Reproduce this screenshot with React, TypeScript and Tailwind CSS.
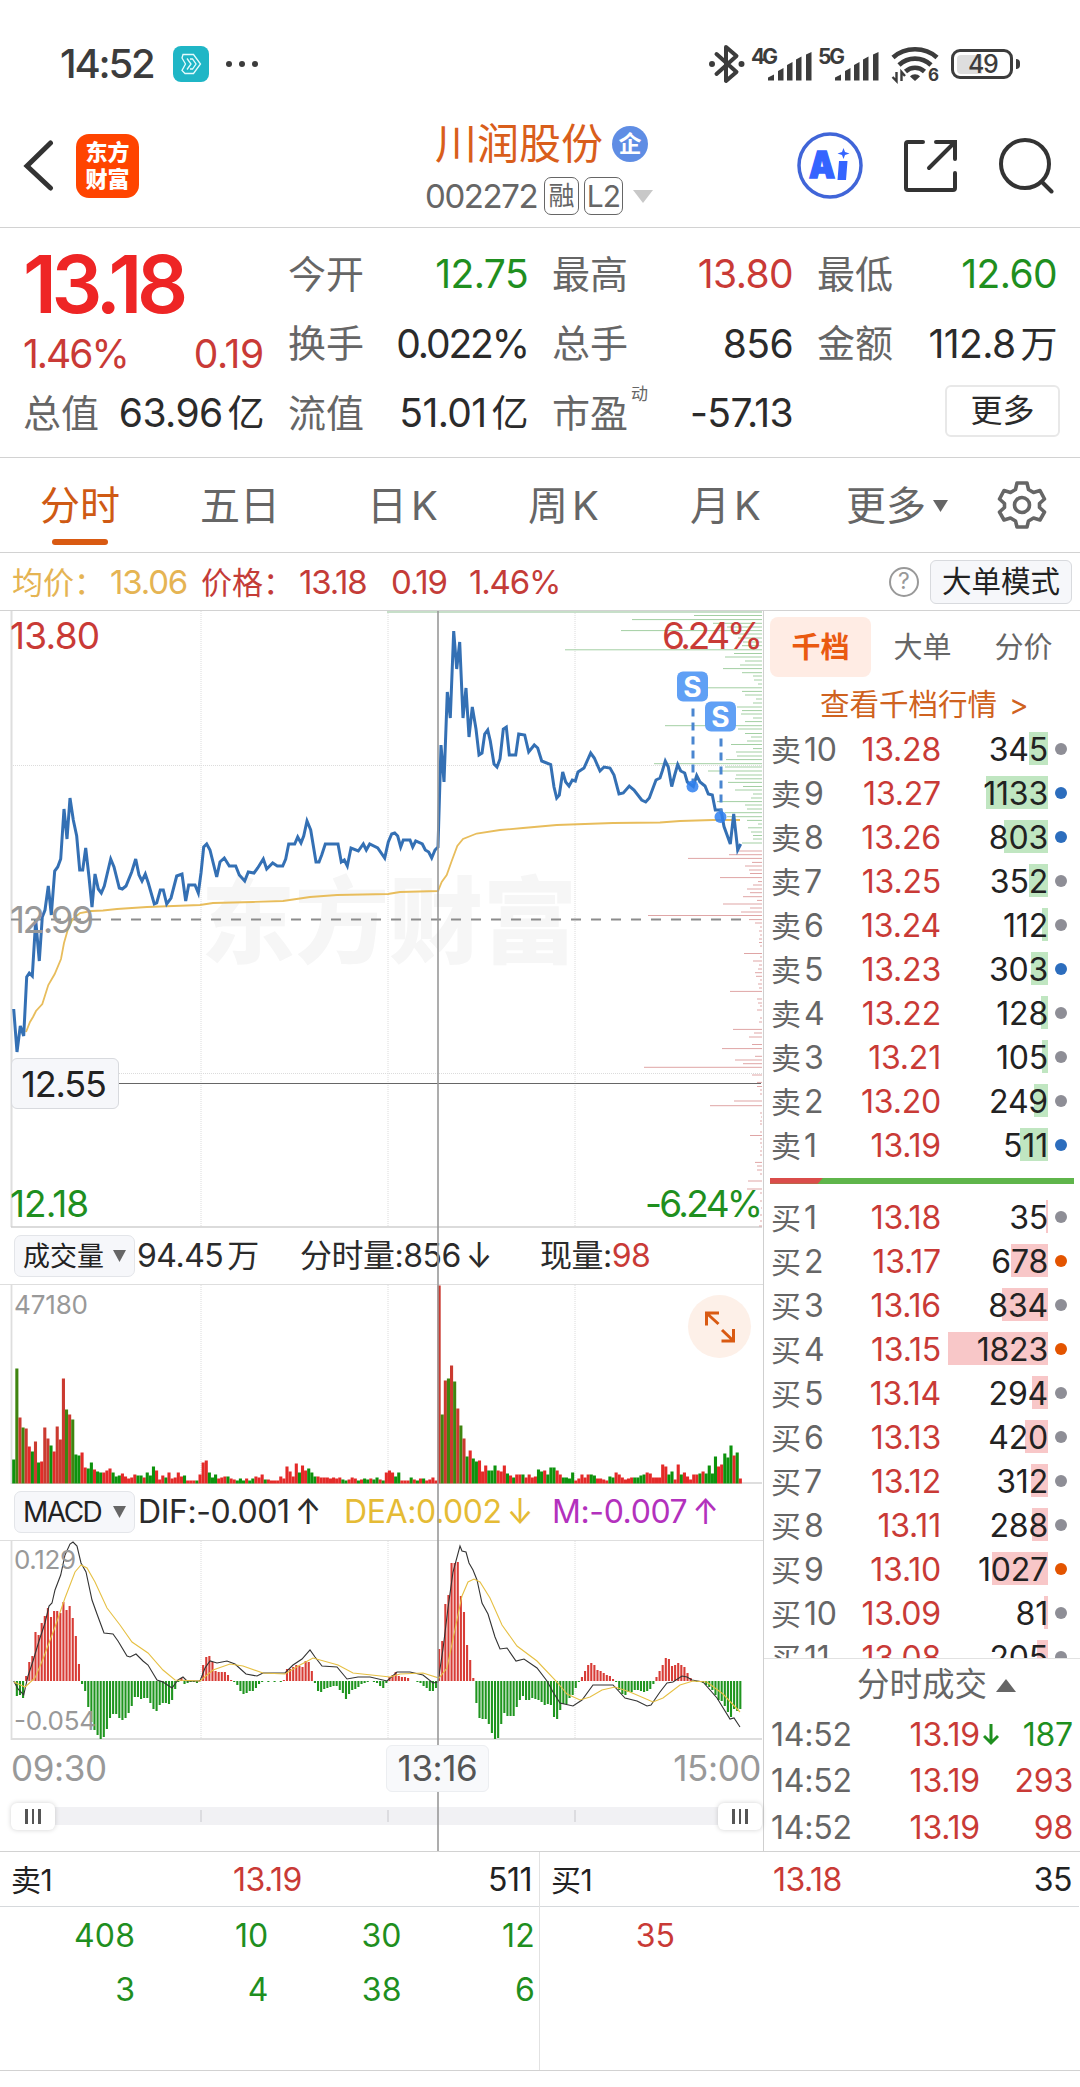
import type { ReactNode } from "react";

const sells = [
  { level: 10, price: "13.28", volume: 345, dot: "gray" },
  { level: 9, price: "13.27", volume: 1133, dot: "blue" },
  { level: 8, price: "13.26", volume: 803, dot: "blue" },
  { level: 7, price: "13.25", volume: 352, dot: "gray" },
  { level: 6, price: "13.24", volume: 112, dot: "gray" },
  { level: 5, price: "13.23", volume: 303, dot: "blue" },
  { level: 4, price: "13.22", volume: 128, dot: "gray" },
  { level: 3, price: "13.21", volume: 105, dot: "gray" },
  { level: 2, price: "13.20", volume: 249, dot: "gray" },
  { level: 1, price: "13.19", volume: 511, dot: "blue" },
];

const buys = [
  { level: 1, price: "13.18", volume: 35, dot: "gray" },
  { level: 2, price: "13.17", volume: 678, dot: "orange" },
  { level: 3, price: "13.16", volume: 834, dot: "gray" },
  { level: 4, price: "13.15", volume: 1823, dot: "orange" },
  { level: 5, price: "13.14", volume: 294, dot: "gray" },
  { level: 6, price: "13.13", volume: 420, dot: "gray" },
  { level: 7, price: "13.12", volume: 312, dot: "gray" },
  { level: 8, price: "13.11", volume: 288, dot: "gray" },
  { level: 9, price: "13.10", volume: 1027, dot: "orange" },
  { level: 10, price: "13.09", volume: 81, dot: "gray" },
  { level: 11, price: "13.08", volume: 205, dot: "gray" },
];

const MAX_VOLUME = 1823;

const dotColors: Record<string, string> = {
  gray: "bg-[#8e8e96]",
  blue: "bg-[#2c6dbd]",
  orange: "bg-[#e35400]",
};

const pricePoints =
  "13.7,398 17,441 20.3,415 23.7,425 26.7,366 29.3,362 32.3,365 35.7,309 39.3,350 42.3,306 45,299 48.3,275 51.3,304 54.7,260 57.7,256 60.7,248 64,198 67,228 70,187 73.3,209 76.7,225 79.7,259 82.7,259 85.7,237 89,266 92,296 95,263 98.3,278 101.3,282 104.3,275 110.7,248 114,256 119.3,277 122.3,278 126,275 131.7,261 135.7,248 139,264 142,270 145.3,263 148.3,272 154.3,293 156.7,292 160.3,279 163.3,279 166.7,293 171,287 176.7,265 182,263 185.7,290 188.7,274 195,274 198.3,282 201,262 203.7,236 206.7,233 210,239 216.7,266 220,251 224.3,247 229.3,255 235.7,255 239.3,264 244.7,270 248.3,261 254,262 257.7,257 263.3,248 266.7,258 272.7,252 277.3,255 282.7,255 285.7,248 288.7,233 294.7,233 297.7,226 301,232 303.7,225 307,210 310.7,219 316,251 319,251 321.7,244 325.3,233 338,233 341.3,251 344.3,249 347.3,255 351,237 358.3,240 363.3,233 366.3,239 369.7,233 377.7,237 384.7,247 388.3,231 391.7,223 394.7,222 397.7,225 400.7,236 403.3,229 410,229 412.7,236 415.7,230 422.3,233 425.3,239 428.7,241 431.7,247 435,239 438,236 441,134 444,171 447.3,81 450.3,107 453.7,20 456.7,58 459.7,31 463,107 466,77 469,126 472.3,96 476,118 479,144 482,142 484.7,123 487.7,119 490.3,130 494,153 497,156 500,148 503.3,118 506.3,116 509.3,144 515.7,144 518.7,123 524.7,124 528.7,141 534.3,134 537.7,137 541.7,150 550.7,153.5 554,176 556.7,187 559.3,184 562.7,161 565.7,171 569,175 572.3,169 575.3,170 578,161 584,157 590.7,142 594.3,147 600,160 604,156 610,157 614,164 619,183 623.3,182 629.3,175 634,179 641.7,189 645.7,191 649.3,187 656,169 660,167 662.3,160 665.3,150 668.3,156 671.7,175.5 674.7,164 677.7,153.5 680.7,160 684.7,162 687.3,171 693.3,175.5 696.7,164.5 700,171 705,175 708.3,183 712.3,184 715.3,199 721,199 724,215.5 730.3,233 733.7,203 737.7,239 740.7,233";

const averagePoints =
  "26,421 30,411 33,406 36,400 42.3,393 48.3,374 54.7,363 61,348 64,332 67.7,319 72.7,308 80,302 91.7,300 103,299.5 117,298 147,296 200,294 213,292 253,291 283,290 310,286 337,284 388,283 400,281 438,280 441.7,271 446.7,264 451.7,250 457.3,235 463,228 476.7,222.5 500,219 523,217 556.7,214 613,212 660,211.5 680,210 713,209 740,209";

// [y, length] of every resting order level, drawn from the right edge
const askLevels = [
  [4.5, 68], [8.6, 130], [12.3, 49], [16, 35], [19.6, 141], [23, 29], [27, 24], [31, 19], [34.7, 20], [38.8, 197],
  [42.5, 28], [46, 37], [50, 17], [54, 22], [57.6, 39], [61.7, 20], [65, 9], [69, 8], [73, 4], [76.8, 54],
  [80.4, 20], [84, 17], [88, 6], [92, 9], [96, 25], [99.6, 20], [103, 21], [107, 9], [110.6, 17], [114.7, 97],
  [118, 24], [122.5, 17], [126, 11], [130, 15], [133.5, 31], [137.6, 9], [141, 26], [145, 25], [148.6, 36], [152.7, 108],
  [156, 37], [160, 54], [164, 26], [167.8, 27], [171.4, 34], [175.5, 19], [179, 27], [183, 9], [187, 11], [190.6, 45],
  [194, 17], [198, 15], [201.7, 37], [205.7, 35], [209.4, 15], [213, 4], [216.8, 14], [221, 11], [224.5, 9], [228, 9], [232, 20],
];

const bidLevels = [
  [240, 26], [243.7, 33], [247.4, 74], [251.4, 10], [255, 17], [259, 13], [262.5, 12], [266.6, 42], [270.6, 4], [274, 9],
  [278, 15], [281.7, 12], [285.7, 19], [289.4, 5], [293, 39], [297, 12], [301, 21], [304.5, 114], [308.6, 13], [312, 7],
  [316, 2], [320, 3], [324, 2], [328, 3], [331.5, 3], [335, 2], [342.5, 18], [346, 2], [350, 9], [354, 3],
  [358, 4], [361.7, 7], [365.3, 6], [369, 2], [373, 4], [377, 3], [380.4, 32], [388, 5], [392, 4], [395, 2],
  [399, 5], [407, 2], [411, 3], [418.4, 29], [422, 8], [426, 13], [433.5, 10], [437.6, 40], [445.3, 7], [449, 27],
  [452.7, 19], [456.3, 118], [464, 10], [471.4, 5], [475.5, 5], [479, 2], [483, 2], [490, 28], [494.7, 52], [502, 2],
  [506, 1], [510, 2], [513, 2], [521, 2], [524.5, 12], [528, 2], [532, 2], [536, 1], [540, 2], [544, 2],
  [551.4, 7], [555, 5], [559, 5], [563, 2], [570, 14], [578, 15], [582, 2], [590, 2], [597, 1], [604, 2], [610, 2], [615, 3],
];

// one entry per minute, "g" falls and "r" rises
const minuteVolumes =
  "g24 g115 r66 g56 r55 r37 g32 r42 g21 r22 r56 r45 g38 r32 r57 r44 r105 g74 r69 g64 g29 g28 r31 r16 g15 g21 r14 g12 g11 r11 r13 r15 g11 g7 g8 r10 r7 r5 r6 r9 g8 g8 r6 g11 g8 g17 r13 r4 r8 g6 r11 r5 r6 r11 r7 g8 r3 r3 r3 g3 r9 r21 r23 g11 g6 g9 r5 r6 r7 g7 r5 r4 g3 g5 g3 r5 g3 g5 r7 r6 r9 g4 r4 r3 r3 r3 r7 r5 r17 r12 r7 r20 g11 r18 r13 g15 g11 g7 r7 r6 r6 r6 r5 r6 r5 r6 g4 g3 r4 r6 r5 g3 r4 g5 g4 r5 g4 g6 r4 g3 r11 r13 r11 g7 g11 r3 r3 r3 g6 r4 g3 r5 g5 r3 r4 r6 r3 r198 g69 r103 g105 r118 g102 r75 g58 r45 g27 r33 g25 g22 r23 r12 r18 g13 g13 g18 r13 r12 r18 g10 r8 g6 r9 r9 g9 r6 r9 r6 r7 g14 g12 r13 g9 g16 g16 r13 r9 g6 g6 g5 g11 r3 r5 r9 r6 r9 g9 g8 r5 r5 r4 r3 g7 g6 r11 r9 r6 r4 r5 r6 g6 g6 g8 g9 r11 r10 r6 r6 r6 r19 r17 g9 g12 r4 r19 g9 r11 r7 r4 r9 r9 g10 r12 g10 g18 g10 g27 r17 r19 g30 g26 g38 r28 g31 r5"
    .split(" ")
    .map((v) => ({ up: v[0] === "r", size: Number(v.slice(1)) }));

const macdBars = [
  0, -15, -14, -17, 5, 19, 25, 49, 46, 58, 65, 73, 64, 70, 70, 68, 79, 71, 75, 63, 45, 17, -3, -10, -26, -41, -49, -54, -58, -56,
  -48, -37, -33, -33, -37, -39, -37, -32, -25, -16, -16, -18, -17, -17, -22, -28, -30, -24, -22, -22, -23, -19, -8, -1, 3, -3, -2, -1, -1, -2,
  1, 16, 24, 25, 19, 10, 9, 9, 9, 6, 1, -1, -4, -10, -13, -12, -10, -10, -7, -3, -1, 0, -1, 0, -1, 0, -1, 1, 12, 12,
  14, 16, 15, 14, 20, 19, 10, -2, -10, -11, -8, -7, -6, -5, -5, -9, -12, -18, -13, -9, -8, -6, -3, -2, -1, 0, -1, -2, -5, -7,
  -2, 4, 6, 9, 5, 4, 4, 3, 0, 0, -1, -2, -5, -7, -10, -10, -7, 32, 40, 77, 86, 118, 118, 119, 85, 69, 36, 21, 3, -22,
  -37, -38, -38, -43, -52, -58, -57, -43, -32, -35, -35, -35, -26, -19, -15, -19, -19, -17, -18, -19, -21, -24, -23, -24, -36, -38, -29, -23, -23, -17,
  -14, -7, -1, 4, 10, 16, 18, 16, 11, 10, 8, 6, 5, 2, -1, -9, -13, -14, -11, -11, -9, -9, -10, -11, -10, -8, -3, 4, 10, 16,
  23, 22, 15, 16, 18, 16, 14, 8, 3, 0, -1, -1, -2, -4, -6, -9, -14, -19, -20, -25, -31, -36, -28, -30, -28,
];

const difPoints =
  "13.7,140 18,148 23.7,154 28,135 33,120 39,100 45,82 49,65 52,62 55,49 60.7,34 65,14 70,3 73,1 77,5 81,22 86,31 92,59 97,73 104,92 113,93 118,100 127,115 130,116 136,113 143,120 148,124 157,139 163,141 172,147 178,139 183,136 187,140 200,140 205,127 210,120 217,122 227,120 235,123 246,133 257,135 263,132 285,132 293,124 302,118 310,109 315,116 322,125 337,126 347,138 358,136 370,136 387,140 397,131 410,131 423,134 433,142 438,141 443,108 448,67 453,31 460,5 462,10 466,11 469,22 473,29 477,39 482,62 488,73 495,96 500,108 507,107 516,120 524,118 537,127 547,140 553,151 560,162 573,165 582,159 593,144 613,144 625,157 637,160 647,165 651,164 660,151 667,142 673,141 682,135 687,136 692,139 703,141 717,157 730,178 734,177 740,186";

const deaPoints =
  "14,141 25,146 35,137 43,118 55,86 65,57 75,31 81,24 87,27 95,41 107,67 120,84 132,101 148,112 163,129 175,139 200,140 213,129 230,123 243,125 263,132 285,133 300,124 313,117 338,124 353,132 390,136 400,133 423,132 439,137 447,127 453,98 462,55 468,41 474,38 480,41 490,57 502,84 517,105 537,120 557,141 567,153 580,159 590,156 602,149 615,146 630,151 653,161 663,157 680,144 693,140 707,141 723,153 740,171";

const STEP = 3.105;
const gridX = [201, 388, 575];

function StatusBar() {
  return (
    <div className="flex h-[128px] items-center pl-[60px] pr-[60px] text-[#3c3c3c]">
      <span className="w-[95px] text-[40px] font-medium leading-none tracking-[-2.2px]">14:52</span>
      <div className="ml-[18px] flex size-9 items-center justify-center rounded-[8px] bg-[#1fb6c6]">
        <svg width="22" height="22" viewBox="0 0 22 22" fill="none" stroke="#e6fbfd" strokeWidth="1.3">
          <path d="M3 1.500h10.500l7 9.500-7 9.500H5L2 17.500 5.500 11 2 5z" />
          <path d="M7 5.500l4 5.500-4 5.500M10 6h2.500l3.500 5-3.500 5H10" />
        </svg>
      </div>
      <div className="ml-[17px] flex gap-[7px]">
        <i className="size-[6px] rounded-full bg-current" />
        <i className="size-[6px] rounded-full bg-current" />
        <i className="size-[6px] rounded-full bg-current" />
      </div>
      <div className="ml-auto flex items-center">
        <svg width="36" height="40" viewBox="0 0 36 40" fill="none" stroke="currentColor" strokeWidth="4" strokeLinejoin="round" strokeLinecap="round">
          <path d="M7.500 10l20 18-10.500 9V3l10.500 9-20 18" />
          <circle cx="3" cy="20" r="1.5" strokeWidth="3" />
          <circle cx="32.500" cy="20" r="1.500" strokeWidth="3" />
        </svg>
        <Signal label="4G" className="ml-[7px]" />
        <Signal label="5G" className="ml-[7px]" />
        <svg className="ml-3 overflow-visible" width="48" height="38" viewBox="0 0 48 38" fill="none" stroke="currentColor" strokeWidth="4.600">
          <path d="M2 12.500C14 1.500 34 1.500 46 12.500" />
          <path d="M8 20c9-8.500 23-8.500 32 0" />
          <path d="M14.500 26.500c5.500-5 13.500-5 19 0" />
          <path d="M19 31.500c2.500-3 7.500-3 10 0L24 36z" fill="currentColor" stroke="none" />
          <path d="M5.500 27v9l-4-4M10.500 36v-9l3.500 4" strokeWidth="2.400" />
          <text x="37" y="36" fontSize="17" fontWeight="700" fill="currentColor" stroke="none">6</text>
        </svg>
        <div className="ml-3 flex h-[30px] w-[62px] items-center rounded-[9px] border-[3px] border-current p-[3px]">
          <div className="h-[19px] w-[25px] rounded-l-[4px] bg-[#dedede]" />
          <span className="-ml-[14px] text-[25px] font-medium leading-none tracking-[-1.500px]">49</span>
        </div>
        <i className="ml-[3px] h-[10px] w-[4px] rounded-r bg-current" />
      </div>
    </div>
  );
}

function Signal({ label, className }: { label: string; className: string }) {
  return (
    <svg className={`overflow-visible ${className}`} width="60" height="36" viewBox="0 0 60 36" fill="currentColor">
      <text x="-1" y="17.500" fontSize="21" fontWeight="700" textLength="27">{label}</text>
      <path d="M16 34.500v-3l6-3v6zM26 34.500V25l5.500-3v12.500zM35 34.500V19l5.500-3v18.500zM44 34.500V13.500l5.500-3v24zM54 34.500V8.500l5.500-2.500v28.500z" />
    </svg>
  );
}

function Header() {
  return (
    <header className="flex h-[100px] items-start border-b border-[#d2d2d2] pt-[4px] text-[#333]">
      <svg className="ml-[23px] mt-[7px]" width="32" height="52" viewBox="0 0 32 52" fill="none" stroke="currentColor" strokeWidth="5" strokeLinecap="round">
        <path d="M27.500 4L4 27l23.500 22" />
      </svg>
      <div className="ml-[21px] mt-[2px] flex h-[64px] w-[63px] flex-col items-center justify-center rounded-[13px] bg-[#ff4400] text-[22px] font-black leading-[27px] text-white">
        <span>东方</span>
        <span>财富</span>
      </div>
      <div className="ml-[286px] w-[240px]">
        <div className="ml-[10px] mt-[-11px] flex h-[46px] items-center">
          <span className="text-[42px] leading-none text-[#d95e1b]">川润股份</span>
          <span className="ml-[9px] flex size-9 items-center justify-center rounded-full bg-[#5f8de4] text-[23px] font-bold leading-none text-white">企</span>
        </div>
        <div className="mt-[10px] flex h-[38px] items-center text-[#666]">
          <span className="w-[119px] text-[33px] leading-none tracking-[-1.400px]">002272</span>
          <span className="flex h-[38px] w-[35px] items-center justify-center rounded-[7px] border border-[#666] text-[26px] leading-none">融</span>
          <span className="ml-[5px] flex h-[38px] w-[39px] items-center justify-center rounded-[7px] border border-[#666] text-[30px] leading-none tracking-[-1px]">L2</span>
          <svg className="ml-[10px]" width="20" height="13" viewBox="0 0 20 13"><path d="M0 0h20L10 13z" fill="#c8c8c8" /></svg>
        </div>
      </div>
      <svg className="ml-[132px]" width="66" height="68" viewBox="0 0 66 68">
        <ellipse cx="33" cy="33.500" rx="31" ry="31.500" fill="none" stroke="#4065d8" strokeWidth="3.500" />
        <text x="12" y="46" fontSize="37" fontWeight="900" fill="#3464ff" stroke="#3464ff" strokeWidth="1.500" textLength="26" lengthAdjust="spacingAndGlyphs">A</text>
        <path d="M42 29h8.500l-1.500 19h-8.500zM46.500 16l1.500 4 4.500 1.500-4.500 1.500-1.500 4-1.500-4-4.500-1.500 4.500-1.500z" fill="#3464ff" />
      </svg>
      <svg className="ml-[40px] mt-[7px]" width="54" height="54" viewBox="0 0 54 54" fill="none" stroke="currentColor" strokeWidth="4" strokeLinecap="round">
        <path d="M20 3H5a2 2 0 0 0-2 2v44a2 2 0 0 0 2 2h45a2 2 0 0 0 2-2V34M33 3h19v17M51 4L26 29" />
      </svg>
      <svg className="ml-[39px] mt-[5px]" width="58" height="58" viewBox="0 0 58 58" fill="none" stroke="currentColor" strokeWidth="4" strokeLinecap="round">
        <circle cx="29" cy="27" r="24" />
        <path d="M45.500 44.500l10 10" />
      </svg>
    </header>
  );
}

function Stat({ label, value, unit, color = "text-[#2b2b2b]", sup }: { label: string; value: string; unit?: string; color?: string; sup?: string }) {
  return (
    <div className="flex h-[69.500px] items-center justify-between">
      <span className="relative text-[38px] leading-none text-[#666]">
        {label}
        {sup && <sup className="absolute -right-[20px] -top-[8px] text-[17px] leading-none">{sup}</sup>}
      </span>
      <span className={`text-[39px] leading-none ${value.includes("%") ? "tracking-[-2.100px]" : "tracking-[-.6px]"} ${color}`}>
        {value}
        {unit && <span className="ml-[5px] text-[37px]">{unit}</span>}
      </span>
    </div>
  );
}

function Quote() {
  return (
    <section className="flex h-[230px] border-b border-[#d2d2d2] pl-[23px] pt-[11px]">
      <div className="w-[241px]">
        <div className="mt-[7px] flex h-[76px] items-center text-[80px] font-semibold leading-none tracking-[-5.300px] text-[#ee2525]">13.18</div>
        <div className="mt-[7px] flex h-[49px] items-center justify-between text-[39px] leading-none text-[#c93a36]">
          <span className="tracking-[-2px]">1.46%</span>
          <span className="tracking-[-.3px]">0.19</span>
        </div>
        <Stat label="总值" value="63.96" unit="亿" />
      </div>
      <div className="ml-[24px] w-[240px]">
        <Stat label="今开" value="12.75" color="text-[#1f8f1f]" />
        <Stat label="换手" value="0.022%" />
        <Stat label="流值" value="51.01" unit="亿" />
      </div>
      <div className="ml-[24px] w-[241px]">
        <Stat label="最高" value="13.80" color="text-[#c93a36]" />
        <Stat label="总手" value="856" />
        <Stat label="市盈" value="-57.13" sup="动" />
      </div>
      <div className="ml-[24px] w-[240px]">
        <Stat label="最低" value="12.60" color="text-[#1f8f1f]" />
        <Stat label="金额" value="112.8" unit="万" />
        <button className="ml-auto mr-[-3px] mt-[7px] flex h-[52px] w-[115px] items-center justify-center rounded-[6px] border-2 border-[#e8e8e8] text-[32px] leading-none text-[#2b2b2b]">
          更多
        </button>
      </div>
    </section>
  );
}

function Tabs() {
  return (
    <nav className="flex h-[95px] border-b border-[#d2d2d2] text-[40px] leading-none text-[#666]">
      <div className="ml-[40px] flex w-[80px] flex-col items-center text-[#cf5a14]">
        <span className="mt-[28px]">分时</span>
        <i className="mt-[13px] h-[6px] w-[56px] rounded-full bg-[#d95a12]" />
      </div>
      <span className="ml-[80px] mt-[28px] w-[80px]">五日</span>
      <span className="ml-[87px] mt-[28px] w-[80px]">日<span className="ml-1">K</span></span>
      <span className="ml-[81px] mt-[28px] w-[80px]">周<span className="ml-1">K</span></span>
      <span className="ml-[82px] mt-[28px] w-[80px]">月<span className="ml-1">K</span></span>
      <span className="ml-[76px] mt-[28px] w-[80px]">更多</span>
      <svg className="ml-[7px] mt-[42px]" width="15" height="12" viewBox="0 0 15 12"><path d="M0 0h15L7.500 12z" fill="#666" /></svg>
      <svg className="ml-[49px] mt-[22px]" width="50" height="50" viewBox="0 0 50 50" fill="none" stroke="#666" strokeWidth="3.600" strokeLinejoin="round">
        <path d="M20 3h10l1.500 6.500 5 3L43 10.500l4.500 8.500-5 4.500v4l5 4.500L43 40l-6.500-2-5 3L30 47H20l-1.500-6-5-3L7 40l-4.500-8 5-4.500v-4l-5-4.500L7 10.500l6.500 2 5-3z" />
        <circle cx="25" cy="25" r="7.500" />
      </svg>
    </nav>
  );
}

function InfoLine() {
  return (
    <div className="flex h-[58px] items-center border-b border-[#d2d2d2] pt-[2px] text-[33px] leading-none tracking-[-1.200px] text-[#c43c38]">
      <span className="ml-[12px] w-[98px] text-[31px] tracking-normal text-[#e5b453]">均价：</span>
      <span className="w-[91px] text-[#e5b453]">13.06</span>
      <span className="w-[98px] text-[31px] tracking-normal">价格：</span>
      <span className="w-[92px]">13.18</span>
      <span className="w-[78px]">0.19</span>
      <span>1.46%</span>
      <span className="mb-[2px] ml-auto flex size-[30px] items-center justify-center rounded-full border-2 border-[#999] text-[23px] tracking-normal text-[#999]">?</span>
      <button className="mb-[2px] ml-[11px] mr-[8px] flex h-[44px] w-[142px] items-center justify-center rounded-[6px] border border-[#d8dade] bg-[#f6f7fa] text-[29.500px] tracking-normal text-[#222]">
        大单模式
      </button>
    </div>
  );
}

function VerticalGrid({ height }: { height: number }) {
  return (
    <g stroke="#dcdcdc" strokeDasharray="1 1">
      {gridX.map((x) => (
        <path key={x} d={`M${x} 0V${height}`} />
      ))}
    </g>
  );
}

function Marker({ x, y, end }: { x: number; y: number; end: number }) {
  return (
    <g>
      <path d={`M${x + 0.5} ${y + 37}V${end - 3}`} stroke="#4a86d0" strokeWidth="3" strokeDasharray="8 6" />
      <circle cx={x} cy={end} r="6" fill="#2f80f0" opacity=".85" />
      <rect x={x - 15.5} y={y} width="31" height="30" rx="6" fill="#60a0f5" />
      <text x={x} y={y + 25} fontSize="28" fontWeight="700" fill="#fff" textAnchor="middle">S</text>
    </g>
  );
}

function PriceChart() {
  return (
    <div className="relative h-[617px]">
      <svg className="block" width="763" height="617" viewBox="0 0 763 617" fill="none">
        <text x="201" y="345" fontSize="94" fontWeight="900" fill="#f6f6f6">东方财富</text>
        <VerticalGrid height={616} />
        <path d="M11 154.500H762M11 462.500H762" stroke="#dcdcdc" strokeDasharray="1 1" />
        <path d="M11.500 0V616" stroke="#dedede" strokeWidth="2" />
        <path d="M11 616H762" stroke="#cfcfcf" strokeWidth="1.500" />
        <path d="M387 .5H762" stroke="#c7dfc9" strokeWidth="3" />
        <g stroke="#a3cfa3">
          {askLevels.map(([y, w]) => <path key={y} d={`M${762 - w} ${y}H762`} />)}
        </g>
        <g stroke="#dfa5a5">
          {bidLevels.map(([y, w]) => <path key={y} d={`M${762 - w} ${y}H762`} />)}
        </g>
        <path d="M11 308.500H742" stroke="#8c8c8c" strokeWidth="1.800" strokeDasharray="10 10" />
        <polyline points={averagePoints} stroke="#e8bd5c" strokeWidth="1.800" />
        <polyline points={pricePoints} stroke="#3470b4" strokeWidth="3" />
        <path d="M119 472.500H761" stroke="#666" />
        <Marker x={692.5} y={60.5} end={175.5} />
        <Marker x={720.5} y={90.5} end={206} />
        <g fontSize="37" letterSpacing="-1.200">
          <text x="10" y="38" fill="#c93a36" textLength="89">13.80</text>
          <text x="10" y="322" fill="#999" textLength="83">12.99</text>
          <text x="10" y="606" fill="#1f8f1f" textLength="78">12.18</text>
          <text x="662" y="38" fill="#c93a36" textLength="100">6.24%</text>
          <text x="645" y="606" fill="#1f8f1f" textLength="117">-6.24%</text>
        </g>
      </svg>
      <span className="absolute left-[11px] top-[447px] flex h-[51px] w-[108px] items-center justify-center rounded-[6px] border border-[#d8dade] bg-[#f6f7fa] pr-[3px] text-[36px] leading-none tracking-[-1.100px] text-[#222]">
        12.55
      </span>
    </div>
  );
}

function IndicatorPill({ children }: { children: ReactNode }) {
  return (
    <span className="ml-[14px] flex h-[42px] w-[121px] items-center justify-between rounded-[7px] border border-[#e3e5e9] bg-[#f6f7fa] pl-[8px] pr-[8px] text-[#222]">
      {children}
      <svg width="13" height="12" viewBox="0 0 13 12"><path d="M0 0h13L6.500 12z" fill="#666" /></svg>
    </span>
  );
}

function VolumePanel() {
  return (
    <>
      <div className="flex h-[57px] items-center border-b border-[#dedede] text-[32px] leading-none tracking-[-.5px] text-[#2b2b2b]">
        <IndicatorPill><span className="text-[27px] tracking-normal">成交量</span></IndicatorPill>
        <span className="ml-[2px] w-[163px]">94.45<span className="ml-1">万</span></span>
        <span className="w-[240px]">分时量:856<Arrow dir="down" /></span>
        <span>现量:<span className="text-[#c93a36]">98</span></span>
      </div>
      <div className="relative h-[199px]">
        <svg className="block" width="763" height="199" viewBox="0 0 763 199">
          <VerticalGrid height={199} />
          <path d="M11.500 0V199M11 198H762" stroke="#dedede" strokeWidth="1.800" />
          {minuteVolumes.map((bar, i) => (
            <rect key={i} x={12.2 + i * STEP} y={198.5 - bar.size} width="3.100" height={bar.size} fill={bar.up ? (bar.size > 40 ? "#cb3a30" : "#e42a28") : bar.size > 40 ? "#3f8510" : "#0d920d"} />
          ))}
          <text x="14" y="29" fontSize="26" fill="#999" textLength="74">47180</text>
        </svg>
        <span className="absolute right-[12px] top-[10px] flex size-[63px] items-center justify-center rounded-full bg-[#fdf0e8]">
          <svg width="32" height="32" viewBox="0 0 32 32" fill="none" stroke="#d95a12" strokeWidth="3">
            <path d="M15 2H2.500v12.500M3 2.500l11.500 10.500M17.500 30h12V18M29 29.500L18 19" />
          </svg>
        </span>
      </div>
    </>
  );
}

function Arrow({ dir }: { dir: "up" | "down" }) {
  return <span className="ml-[5px] inline-block scale-y-110 text-[32px] tracking-normal">{dir === "up" ? "↑" : "↓"}</span>;
}

function MacdPanel() {
  return (
    <>
      <div className="flex h-[57px] items-center border-b border-[#dedede] text-[32px] leading-none tracking-[-.4px] text-[#2b2b2b]">
        <IndicatorPill><span className="text-[28px] tracking-[-1.500px]">MACD</span></IndicatorPill>
        <span className="ml-[3px] w-[206px]">DIF:-0.001<Arrow dir="up" /></span>
        <span className="w-[208px] text-[#e5bb35]">DEA:0.002<Arrow dir="down" /></span>
        <span className="text-[#b331bd]">M:-0.007<Arrow dir="up" /></span>
      </div>
      <svg className="block" width="763" height="199" viewBox="0 0 763 199" fill="none">
        <VerticalGrid height={198} />
        <path d="M11.500 0V199M11 198H762" stroke="#dedede" strokeWidth="1.800" />
        {macdBars.map((v, i) => (
          <rect key={i} x={12.7 + i * STEP} y={v > 0 ? 140 - v : 140} width="2.100" height={Math.abs(v)} fill={v > 0 ? "#d83c36" : "#1f951f"} />
        ))}
        <polyline points={difPoints} stroke="#333" strokeWidth="1.100" />
        <polyline points={deaPoints} stroke="#e6c044" strokeWidth="1.100" />
        <g fontSize="26" fill="#999">
          <text x="14" y="28" textLength="62">0.129</text>
          <text x="14" y="189" textLength="82">-0.054</text>
        </g>
      </svg>
    </>
  );
}

function Handle() {
  return (
    <span className="z-10 flex h-[27px] w-[44px] items-center justify-center gap-[4px] rounded-[6px] bg-white shadow-[0_0_5px_rgba(0,0,0,.18)]">
      <i className="h-[15px] w-[2.500px] bg-[#555]" />
      <i className="h-[15px] w-[2.500px] bg-[#555]" />
      <i className="h-[15px] w-[2.500px] bg-[#555]" />
    </span>
  );
}

function TimeAxis() {
  return (
    <>
      <div className="flex h-[56px] items-center pl-[11px] pr-[2px] text-[35px] leading-none tracking-[-.4px] text-[#999]">
        <span className="w-[375px]">09:30</span>
        <span className="z-10 flex h-[47px] w-[103px] items-center justify-center rounded-[6px] border border-[#eceef1] bg-[#f8f9fb] text-[#555]">13:16</span>
        <span className="ml-auto">15:00</span>
      </div>
      <div className="mt-[6px] flex h-[28px] items-center pl-[11px] pr-[1px]">
        <Handle />
        <div className="-mx-1 flex h-[18px] flex-1 items-center bg-[#f1f1f4]">
          <i className="ml-[149px] h-[12px] w-[2px] bg-[#dcdce0]" />
          <i className="ml-[185px] h-[12px] w-[2px] bg-[#dcdce0]" />
          <i className="ml-[185px] h-[12px] w-[2px] bg-[#dcdce0]" />
        </div>
        <Handle />
      </div>
    </>
  );
}

function BookRow({ side, level, price, volume, dot }: { side: "卖" | "买"; level: number; price: string; volume: number; dot: string }) {
  return (
    <div className="flex h-[44px] items-center pl-[7px] text-[32px] leading-none tracking-[-.2px]">
      <span className="flex w-[84px] items-center pt-[2px] text-[#666]">
        <span className="w-[33px] text-[30px]">{side}</span>{level}
      </span>
      <span className="w-[86px] pt-[2px] text-right text-[#c93a36]">{price}</span>
      <span className="relative flex h-[33px] w-[107px] items-center justify-end text-[#222]">
        <i
          className={`absolute right-0 top-0 h-full ${side === "卖" ? "bg-[#c0e6c1]" : "bg-[#f8c7c8]"}`}
          style={{ width: (volume / MAX_VOLUME) * 100 }}
        />
        <span className="relative pt-[2px]">{volume}</span>
      </span>
      <i className={`ml-[7px] size-3 rounded-full ${dotColors[dot]}`} />
    </div>
  );
}

function OrderBook() {
  return (
    <aside className="flex w-[316px] flex-col">
      <div className="mt-[6px] flex h-[60px] items-center px-[6px] text-[29px] leading-none text-[#666]">
        <span className="flex h-[60px] w-[101px] items-center justify-center rounded-[8px] bg-[#ffece4] font-bold text-[#ea5a10]">千档</span>
        <span className="w-[103px] text-center">大单</span>
        <span className="w-[99px] text-center">分价</span>
      </div>
      <div className="flex h-[50px] items-center pl-[56px] pt-[6px] text-[29.500px] leading-none text-[#cf6220]">
        查看千档行情<span className="ml-[12px]">&gt;</span>
      </div>
      {sells.map((row) => <BookRow key={row.level} side="卖" {...row} />)}
      <div className="mb-[11px] ml-[6px] mr-[6px] mt-[11px] flex h-[6px] bg-[#5fb54b]">
        <i className="w-[53px] bg-[#da4c4a] [clip-path:polygon(0_0,100%_0,90%_100%,0_100%)]" />
      </div>
      <div className="h-[464px] overflow-hidden border-b border-[#e2e2e2]">
        {buys.map((row) => <BookRow key={row.level} side="买" {...row} />)}
      </div>
      <div className="flex h-[53px] items-center pl-[93px] text-[32.500px] leading-none text-[#666]">
        分时成交
        <svg className="ml-[9px]" width="20" height="13" viewBox="0 0 20 13"><path d="M0 13h20L10 0z" fill="#666" /></svg>
      </div>
      <Trade volume="187" falling />
      <Trade volume="293" />
      <Trade volume="98" />
    </aside>
  );
}

function Trade({ volume, falling = false }: { volume: string; falling?: boolean }) {
  return (
    <div className="flex h-[46.500px] items-center pl-[7px] pr-[7px] text-[32px] leading-none tracking-[-.2px] text-[#c93a36]">
      <span className="w-[85px] text-[#666]">14:52</span>
      <span className="w-[124px] text-right">13.19</span>
      {falling && (
        <svg className="ml-[3px]" width="16" height="22" viewBox="0 0 16 22" fill="none" stroke="#1f8f1f" strokeWidth="3"><path d="M8 0v19M1 12l7 7 7-7" /></svg>
      )}
      <span className={`ml-auto ${falling ? "text-[#1f8f1f]" : ""}`}>{volume}</span>
    </div>
  );
}

function QueueSide({ label, price, total, orders, color }: { label: string; price: string; total: string; orders: string[]; color: string }) {
  return (
    <div className="w-[539px] text-[32px] leading-none tracking-[-.5px] text-[#222]">
      <div className="flex h-[55px] items-center border-b border-[#d6d9dc] pt-[2px]">
        <span className="ml-[11px] w-[222px] text-[30px]">{label}</span>
        <span className="w-[98px] text-[#c93a36]">{price}</span>
        <span className="ml-auto mr-[7px]">{total}</span>
      </div>
      <div className={`mt-[2px] grid w-[535px] grid-cols-4 pl-[2px] text-right tracking-[.2px] ${color}`}>
        {orders.map((order, i) => (
          <span key={i} className="flex h-[54px] items-center justify-end">{order}</span>
        ))}
      </div>
    </div>
  );
}

export default function App() {
  return (
    <div className="h-[2087px] w-[1080px] overflow-hidden bg-white font-['Inter','Noto_Sans_CJK_SC',sans-serif]">
      <StatusBar />
      <Header />
      <Quote />
      <Tabs />
      <InfoLine />

      <main className="flex h-[1241px] border-b border-[#d2d2d2]">
        <div className="relative w-[764px] border-r border-[#cfcfcf]">
          <PriceChart />
          <VolumePanel />
          <MacdPanel />
          <TimeAxis />
          {/* Crosshair */}
          <i className="absolute left-[437px] top-0 h-full w-[2px] bg-[#999]/80" />
        </div>
        <OrderBook />
      </main>

      {/* Best bid / ask queue */}
      <section className="flex h-[219px] border-b border-[#d2d2d2]">
        <QueueSide label="卖1" price="13.19" total="511" orders={["408", "10", "30", "12", "3", "4", "38", "6"]} color="text-[#1f8f1f]" />
        <div className="border-l border-[#e2e2e2]">
          <QueueSide label="买1" price="13.18" total="35" orders={["35"]} color="text-[#c93a36]" />
        </div>
      </section>
    </div>
  );
}
